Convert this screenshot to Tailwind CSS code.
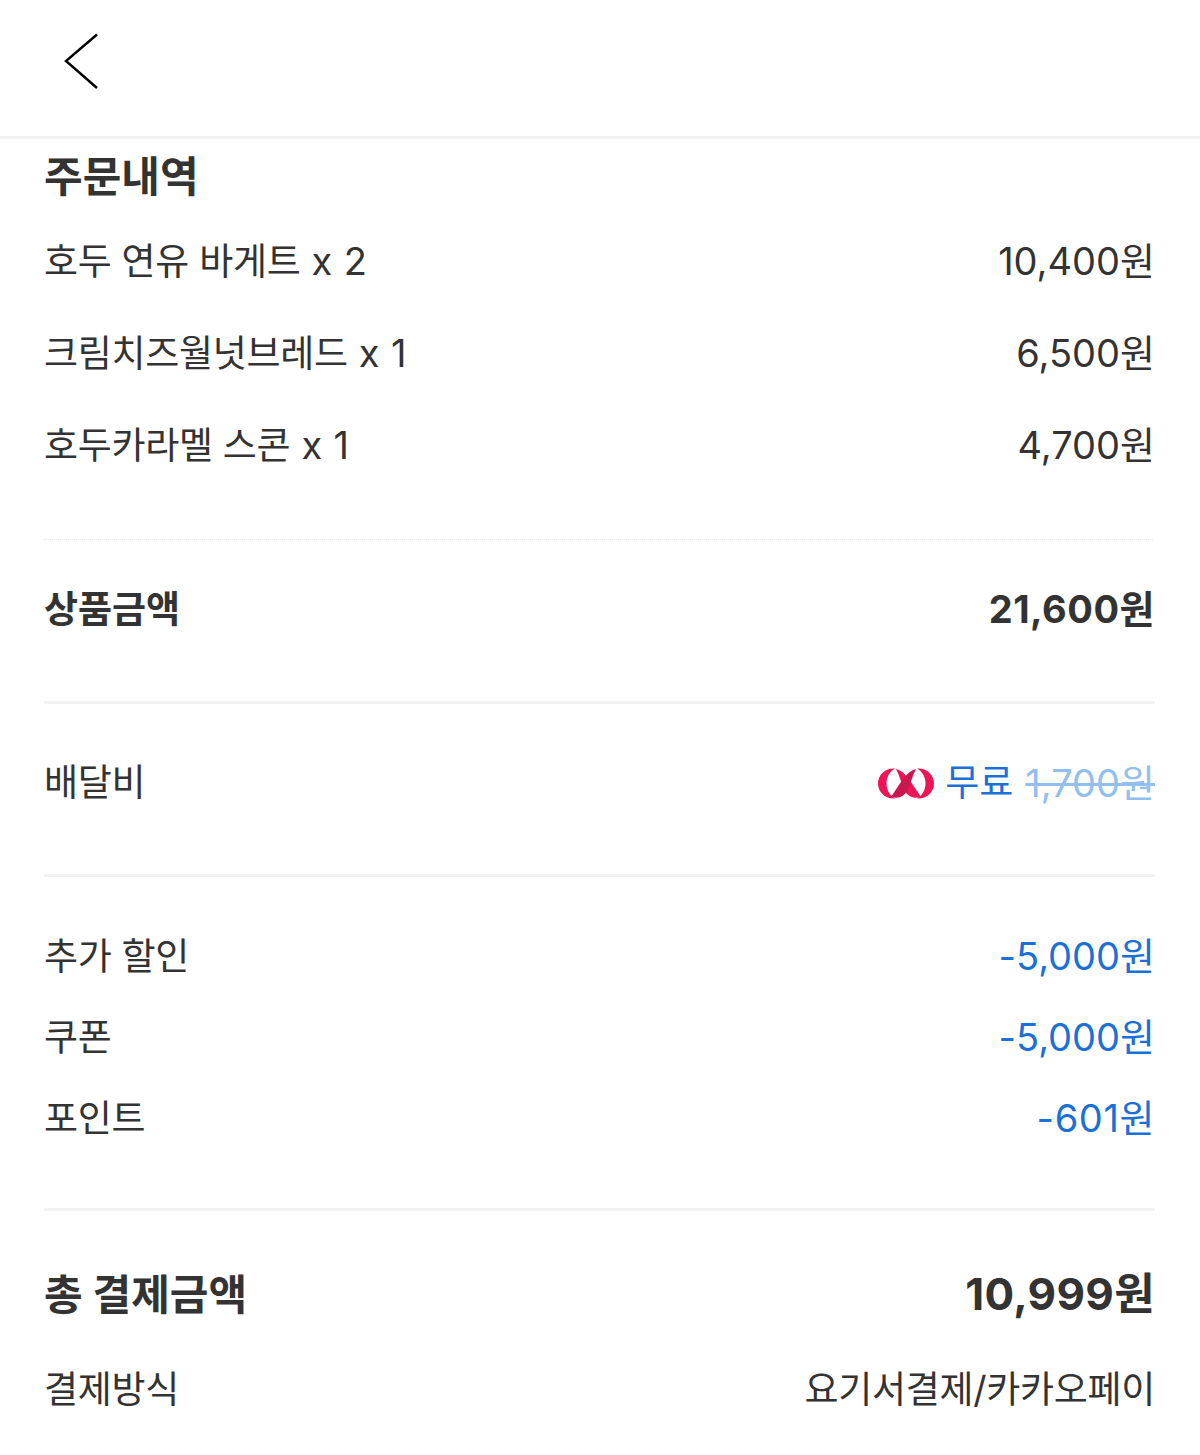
<!DOCTYPE html>
<html lang="ko">
<head>
  <meta charset="UTF-8" />
  <title>주문내역</title>
  <script src="https://cdn.jsdelivr.net/npm/@tailwindcss/browser@4"></script>
</head>
<body class="bg-white">
  <div class="w-[1200px] h-[1455px] overflow-hidden font-['Inter','Noto_Sans_CJK_KR',sans-serif] text-[#333333] text-[37px] tracking-[-0.3px]">
    <!-- header -->
    <header class="h-[139px] border-b-[3px] border-[#f2f2f2] pl-[64px] pt-[33px]">
      <svg width="36" height="58" viewBox="0 0 36 58" fill="none" stroke="#000" stroke-width="2.4"><path d="M33 1.5 L2 28 L33 55"/></svg>
    </header>

    <main class="pl-[44px] pr-[45px]">
      <h2 class="h-[76px] pb-[2px] flex items-center text-[42px] font-bold tracking-normal">주문내역</h2>

      <div class="flex justify-between items-center h-[92px]"><span>호두 연유 바게트<span class="text-[38px] tracking-[0.4px]"> x 2</span></span><span class="text-[38px] tracking-normal">10,400원</span></div>
      <div class="flex justify-between items-center h-[92px]"><span>크림치즈월넛브레드<span class="text-[38px] tracking-[0.4px]"> x 1</span></span><span class="text-[38px] tracking-normal">6,500원</span></div>
      <div class="flex justify-between items-center h-[92px]"><span>호두카라멜 스콘<span class="text-[38px] tracking-[0.4px]"> x 1</span></span><span class="text-[38px] tracking-normal">4,700원</span></div>

      <div class="mt-[48px] mr-[2px] border-t border-dotted border-[#e6e6e6]"></div>
      <div class="flex justify-between items-center h-[164px] pb-[22px] font-bold tracking-normal border-b-[3px] border-[#f2f2f2]"><span>상품금액</span><span class="text-[38px] tracking-[0.5px]">21,600원</span></div>

      <div class="flex justify-between items-center h-[173px] pb-[12px] border-b-[3px] border-[#f2f2f2]">
        <span>배달비</span>
        <span class="flex items-center text-[#1b70d8] tracking-normal">
          <svg class="mr-[11px]" width="56" height="31" viewBox="0 0 56 31">
            <path fill="#ee1455" d="M17 0.5 C6 0 0 8 0 15.5 C0 23 6 31 17 30.5 C11 27 8.5 21 8.5 15.5 C8.5 10 11 4 17 0.5Z"/>
            <path fill="#ee1455" d="M39 0.5 C50 0 56 8 56 15.5 C56 23 50 31 39 30.5 C45 27 47.5 21 47.5 15.5 C47.5 10 45 4 39 0.5Z"/>
            <path fill="#ee1455" d="M18 1 C26 2 33 14 43 29 C34 31 30 28 27 23 C23 16 22 8 18 1Z"/>
            <path fill="#c9174f" d="M38 1 C30 2 23 14 13 29 C22 31 26 28 29 23 C33 16 34 8 38 1Z"/>
          </svg>
          무료<span class="ml-[12px] text-[38px] text-[#93bfee] line-through">1,700원</span>
        </span>
      </div>

      <div class="pt-[39px] pb-[49px] border-b-[3px] border-[#f2f2f2]">
        <div class="flex justify-between items-center h-[81px]"><span>추가 할인</span><span class="text-[38px] tracking-normal text-[#1b70d8]">-5,000원</span></div>
        <div class="flex justify-between items-center h-[81px]"><span>쿠폰</span><span class="text-[38px] tracking-normal text-[#1b70d8]">-5,000원</span></div>
        <div class="flex justify-between items-center h-[81px]"><span>포인트</span><span class="text-[38px] tracking-[0.6px] text-[#1b70d8]">-601원</span></div>
      </div>

      <div class="flex justify-between items-center h-[166px] text-[42px] font-bold tracking-normal"><span>총 결제금액</span><span class="text-[44px] tracking-[0.3px]">10,999원</span></div>
      <div class="flex justify-between items-center h-[26px]"><span>결제방식</span><span>요기서결제/카카오페이</span></div>
    </main>
  </div>
</body>
</html>
